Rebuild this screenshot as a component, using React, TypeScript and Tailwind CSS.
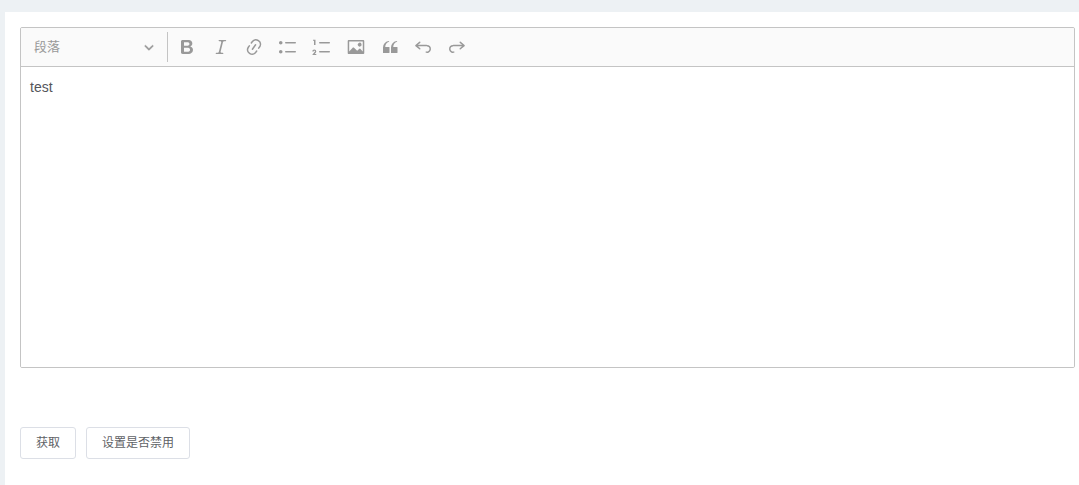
import { useState } from "react";

const toolbarItems = [
  {
    label: "加粗",
    path: "M10.187 17H5.773c-.637 0-1.092-.138-1.364-.415-.273-.277-.409-.718-.409-1.323V4.738c0-.617.14-1.062.419-1.332.279-.27.73-.406 1.354-.406h4.68c.69 0 1.288.041 1.793.124.506.083.96.242 1.36.478.341.197.644.447.906.75a3.262 3.262 0 0 1 .808 2.162c0 1.401-.722 2.426-2.167 3.075C15.05 10.175 16 11.315 16 13.01a3.756 3.756 0 0 1-2.296 3.504 6.1 6.1 0 0 1-1.517.377c-.571.073-1.238.11-2 .11zm-.217-6.217H7v4.087h3.069c1.977 0 2.965-.69 2.965-2.072 0-.707-.256-1.22-.768-1.537-.512-.319-1.277-.478-2.296-.478zM7 5.13v3.619h2.606c.729 0 1.292-.067 1.69-.2a1.6 1.6 0 0 0 .91-.765c.165-.267.247-.566.247-.897 0-.707-.26-1.176-.778-1.409-.519-.232-1.31-.348-2.375-.348H7z",
  },
  {
    label: "倾斜",
    path: "m9.586 14.633.021.004c-.036.335.095.655.393.962.082.083.173.15.274.201h1.474a.6.6 0 1 1 0 1.2H5.304a.6.6 0 0 1 0-1.2h1.15c.474-.07.809-.182 1.005-.334.157-.122.291-.32.404-.597l2.416-9.55a1.053 1.053 0 0 0-.281-.823 1.12 1.12 0 0 0-.442-.296H8.15a.6.6 0 0 1 0-1.2h6.443a.6.6 0 1 1 0 1.2h-1.195c-.376.056-.65.155-.823.296-.215.175-.423.439-.623.79l-2.366 9.347z",
  },
  {
    label: "超链接",
    path: "m11.077 15 .991-1.416a.75.75 0 1 1 1.229.86l-1.148 1.64a.748.748 0 0 1-.217.206 5.251 5.251 0 0 1-8.503-5.955.741.741 0 0 1 .12-.274l1.147-1.639a.75.75 0 1 1 1.228.86L4.933 10.7l.006.003a3.75 3.75 0 0 0 6.132 4.294l.006.004zm5.494-5.335a.748.748 0 0 1-.12.274l-1.147 1.639a.75.75 0 1 1-1.228-.86l.86-1.23a3.75 3.75 0 0 0-6.144-4.301l-.86 1.229a.75.75 0 0 1-1.229-.86l1.148-1.64a.748.748 0 0 1 .217-.206 5.251 5.251 0 0 1 8.503 5.955zm-4.563-2.532a.75.75 0 0 1 .184 1.045l-3.155 4.505a.75.75 0 1 1-1.229-.86l3.155-4.506a.75.75 0 0 1 1.045-.184z",
  },
  {
    label: "项目列表",
    path: "M7 5.75c0 .414.336.75.75.75h9.5a.75.75 0 1 0 0-1.5h-9.5a.75.75 0 0 0-.75.75zm-6 0C1 4.784 1.777 4 2.75 4c.966 0 1.75.777 1.75 1.75 0 .966-.777 1.75-1.75 1.75C1.784 7.5 1 6.723 1 5.75zm6 9c0 .414.336.75.75.75h9.5a.75.75 0 1 0 0-1.5h-9.5a.75.75 0 0 0-.75.75zm-6 0c0-.966.777-1.75 1.75-1.75.966 0 1.75.777 1.75 1.75 0 .966-.777 1.75-1.75 1.75-.966 0-1.75-.777-1.75-1.75z",
  },
  {
    label: "项目编号列表",
    path: "M7 5.75c0 .414.336.75.75.75h9.5a.75.75 0 1 0 0-1.5h-9.5a.75.75 0 0 0-.75.75zM3.5 3v5H2V3.7H1v-1h2.5V3zM.343 17.857l2.59-3.257H2.92a.6.6 0 1 0-1.04 0H.302a2 2 0 1 1 3.995 0h-.001c-.048.405-.16.734-.333.988-.175.254-.59.692-1.244 1.312H4.3v1h-4l.043-.043zM7 14.75a.75.75 0 0 1 .75-.75h9.5a.75.75 0 1 1 0 1.5h-9.5a.75.75 0 0 1-.75-.75z",
  },
  {
    label: "插入图像",
    path: "M6.91 10.54c.26-.23.64-.21.88.03l3.36 3.14 2.23-2.06a.64.64 0 0 1 .87 0l2.52 2.97V4.5H3.2v10.12l3.71-4.08zm10.27-7.51c.6 0 1.09.47 1.09 1.05v11.84c0 .59-.49 1.06-1.09 1.06H2.79c-.6 0-1.09-.47-1.09-1.06V4.08c0-.58.49-1.05 1.1-1.05h14.38zm-5.22 5.56a1.96 1.96 0 1 1 3.4-1.96 1.96 1.96 0 0 1-3.4 1.96z",
  },
  {
    label: "块引用",
    path: "M3 10.423a6.5 6.5 0 0 1 6.056-6.408l.038.67C6.448 5.423 5.354 7.663 5.22 10H9c.552 0 .5.432.5.986v4.511c0 .554-.448.503-1 .503h-5c-.552 0-.5-.449-.5-1.003v-4.574zm8 0a6.5 6.5 0 0 1 6.056-6.408l.038.67c-2.646.739-3.74 2.979-3.873 5.315H17c.552 0 .5.432.5.986v4.511c0 .554-.448.503-1 .503h-5c-.552 0-.5-.449-.5-1.003v-4.574z",
  },
  {
    label: "撤销",
    path: "m5.042 9.367 2.189 1.837a.75.75 0 0 1-.965 1.149l-3.788-3.18a.747.747 0 0 1-.21-.284.75.75 0 0 1 .17-.945L6.23 4.762a.75.75 0 1 1 .964 1.15L4.863 7.866h8.917A.75.75 0 0 1 14 7.9a4 4 0 1 1-1.477 7.718l.344-1.489a2.5 2.5 0 1 0 1.094-4.73l.008-.032H5.042z",
  },
  {
    label: "重做",
    path: "m14.958 9.367-2.189 1.837a.75.75 0 0 0 .965 1.149l3.788-3.18a.747.747 0 0 0 .21-.284.75.75 0 0 0-.17-.945L13.77 4.762a.75.75 0 1 0-.964 1.15l2.331 1.955H6.22A.75.75 0 0 0 6 7.9a4 4 0 1 0 1.477 7.718l-.344-1.489A2.5 2.5 0 1 1 6.039 9.4l-.008-.032h8.927z",
  },
];

function Toolbar({ disabled }: { disabled: boolean }) {
  return (
    <div
      role="toolbar"
      aria-label="编辑器工具栏"
      className="flex h-[39px] items-center border-b border-[#c4c4c4] bg-[#fafafa]"
    >
      <div className="relative w-[146px] text-[#999999]">
        <select
          aria-label="标题类型"
          disabled={disabled}
          className="h-8 w-full appearance-none bg-transparent px-[13px] text-[13px] opacity-100"
        >
          <option>段落</option>
          <option>标题 1</option>
          <option>标题 2</option>
          <option>标题 3</option>
        </select>
        <svg
          viewBox="0 0 10 10"
          fill="currentColor"
          stroke="currentColor"
          strokeWidth="0.3"
          aria-hidden="true"
          className="pointer-events-none absolute top-[11px] right-[13px] size-[10px]"
        >
          <path d="M.941 4.523a.75.75 0 1 1 1.06-1.06l3.006 3.005 3.005-3.005a.75.75 0 1 1 1.06 1.06l-3.549 3.55a.75.75 0 0 1-1.168-.136L.941 4.523z" />
        </svg>
      </div>
      <span className="mr-[2px] h-[30px] w-px bg-[#c4c4c4]" />
      <div className="flex w-[304px]">
        {toolbarItems.map((item) => (
          <button
            key={item.label}
            type="button"
            aria-label={item.label}
            disabled={disabled}
            className="flex h-8 flex-1 items-center justify-center text-[#999999]"
          >
            <svg viewBox="0 0 20 20" fill="currentColor" className="size-5">
              <path d={item.path} />
            </svg>
          </button>
        ))}
      </div>
    </div>
  );
}

export default function App() {
  const [text, setText] = useState("test");
  const [disabled, setDisabled] = useState(true);

  return (
    <div className="min-h-screen bg-[#edf1f4] pt-3 pl-[5px] font-['Liberation_Sans','Noto_Sans_CJK_SC',sans-serif]">
      <main className="min-h-[calc(100vh-12px)] bg-white pt-[15px] pr-1 pb-6 pl-[15px]">
        <div className="overflow-hidden rounded-[2px] border border-[#c4c4c4]">
          <Toolbar disabled={disabled} />
          <textarea
            aria-label="内容"
            value={text}
            readOnly={disabled}
            onChange={(e) => setText(e.target.value)}
            className="block h-[300px] w-full resize-none bg-white px-[9px] py-[10px] text-sm text-[#54555a] outline-none"
          />
        </div>

        <div className="mt-[59px] flex gap-[10px] text-xs text-[#606266]">
          <button
            type="button"
            onClick={() => window.alert(text)}
            className="h-8 rounded-[3px] border border-[#dcdfe6] bg-white px-[15px]"
          >
            获取
          </button>
          <button
            type="button"
            onClick={() => setDisabled(!disabled)}
            className="h-8 rounded-[3px] border border-[#dcdfe6] bg-white px-[15px]"
          >
            设置是否禁用
          </button>
        </div>
      </main>
    </div>
  );
}
